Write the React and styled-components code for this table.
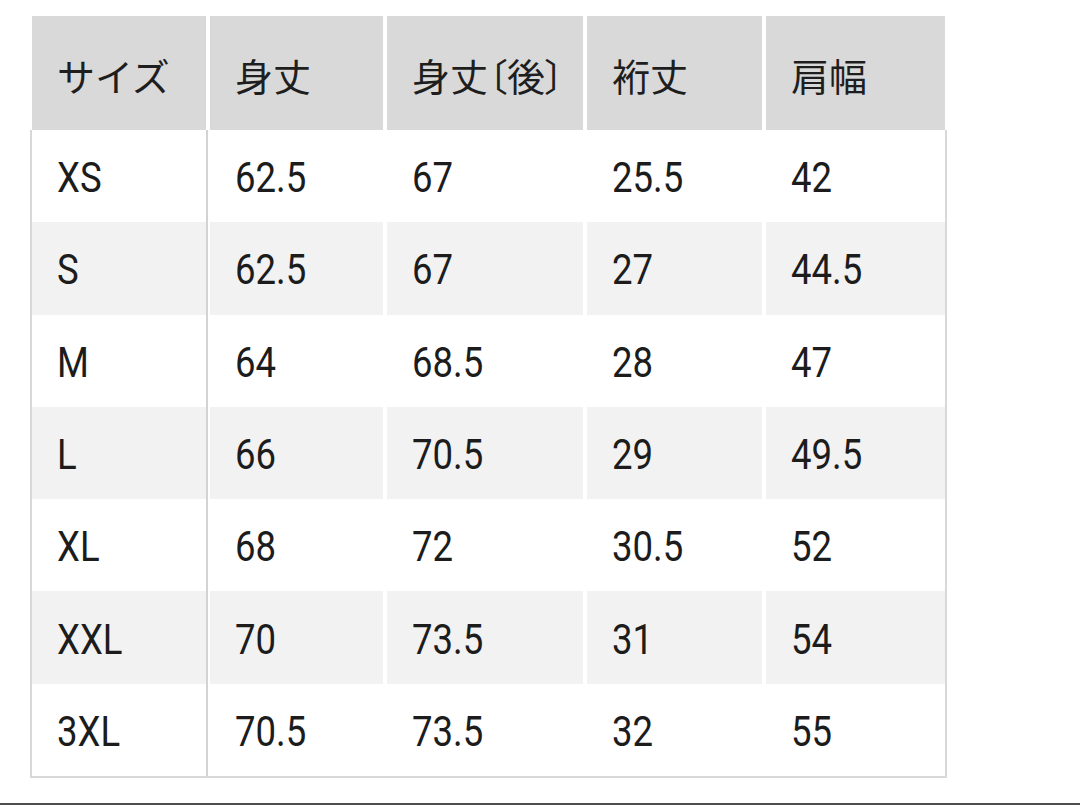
import React from 'react';
import styled, { createGlobalStyle } from 'styled-components';

const Global = createGlobalStyle`
  html, body { margin: 0; padding: 0; background: #ffffff; }
  body {
    width: 1080px;
    height: 805px;
    overflow: hidden;
    font-family: Roboto, "Noto Sans CJK JP", sans-serif;
    color: #1c1c1c;
  }
`;

const Page = styled.div`
  box-sizing: border-box;
  height: 805px;
  padding: 16px 0 0 30px;
  border-bottom: 2px solid #4d4d4d;
`;

const Table = styled.div`
  box-sizing: border-box;
  width: 917px;
  height: 762px;
  display: flex;
  flex-direction: column;
  border: 2px solid #d8d8d8;
  border-top: none;
  background: #ffffff;
`;

const Row = styled.div`
  display: grid;
  grid-template-columns: 174px 173px 196px 175px 1fr;
  column-gap: 4px;
  flex: ${p => (p.$head ? '0 0 114px' : '1 1 0')};
  margin: ${p => (p.$head ? '0 -2px 0 -2px' : '0')};
  padding: ${p => (p.$head ? '0 2px' : '0')};
  background: #ffffff;
`;

const HeadCell = styled.div`
  display: flex;
  align-items: center;
  padding: 2px 0 0 25px;
  background: #d9d9d9;
  font-family: "Noto Sans CJK JP", sans-serif;
  font-size: 38px;
  color: #1e1e1e;
  white-space: nowrap;
`;

const Bracket = styled.span`
  font-feature-settings: "palt";
`;

const Cell = styled.div`
  display: flex;
  align-items: center;
  padding: 3px 0 0 25px;
  background: ${p => (p.$shade ? '#f2f2f2' : '#ffffff')};
  box-shadow: ${p => (p.$first ? '2px 0 0 #d3d3d3' : 'none')};
`;

const Value = styled.span`
  display: inline-block;
  font-family: Roboto, sans-serif;
  font-size: 42px;
  color: #1c1c1c;
  white-space: nowrap;
  transform: scaleX(0.87);
  transform-origin: left center;
`;

const headers = [
  <>サイズ</>,
  <>身丈</>,
  <>身丈<Bracket>〔</Bracket>後<Bracket>〕</Bracket></>,
  <>裄丈</>,
  <>肩幅</>,
];

const rows = [
  ['XS', '62.5', '67', '25.5', '42'],
  ['S', '62.5', '67', '27', '44.5'],
  ['M', '64', '68.5', '28', '47'],
  ['L', '66', '70.5', '29', '49.5'],
  ['XL', '68', '72', '30.5', '52'],
  ['XXL', '70', '73.5', '31', '54'],
  ['3XL', '70.5', '73.5', '32', '55'],
];

export default function App() {
  return (
    <>
      <Global />
      <Page>
        <Table>
          <Row $head>
            {headers.map((h, i) => (
              <HeadCell key={i}>{h}</HeadCell>
            ))}
          </Row>
          {rows.map((r, i) => (
            <Row key={r[0]}>
              {r.map((v, j) => (
                <Cell key={j} $shade={i % 2 === 1} $first={j === 0}>
                  <Value>{v}</Value>
                </Cell>
              ))}
            </Row>
          ))}
        </Table>
      </Page>
    </>
  );
}
